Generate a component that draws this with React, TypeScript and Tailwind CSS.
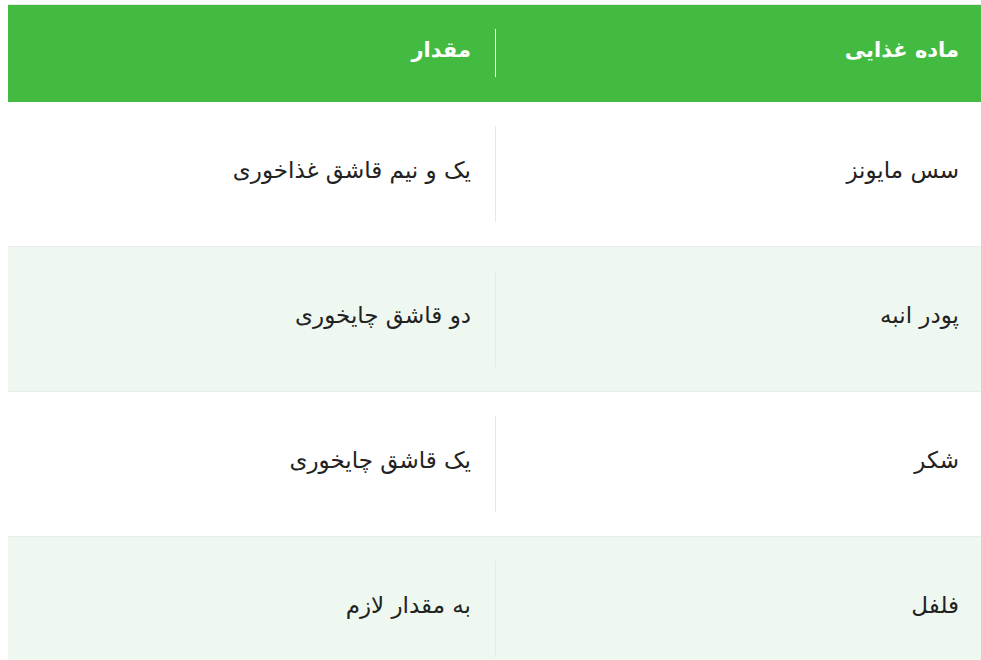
const rows = [
  { item: 'سس مایونز', amount: 'یک و نیم قاشق غذاخوری' },
  { item: 'پودر انبه', amount: 'دو قاشق چایخوری' },
  { item: 'شکر', amount: 'یک قاشق چایخوری' },
  { item: 'فلفل', amount: 'به مقدار لازم' },
]

export default function App() {
  return (
    <div
      dir="rtl"
      className="min-h-screen bg-white pt-1"
      style={{ fontFamily: '"DejaVu Sans", sans-serif' }}
    >
      <div className="mr-[-1px] ml-2 w-[974px] border-t border-[#e6e6e6]">
        <div className="grid grid-cols-2 border-b border-[#43bb41] bg-[#43bb41] text-white">
          <div className="py-6 pr-[23px]">
            <div className="flex h-12 items-center border-l border-white pb-1 text-[21px] font-bold">
              ماده غذایی
            </div>
          </div>
          <div className="py-6">
            <div className="flex h-12 items-center pr-6 pb-1 text-[21px] font-bold">مقدار</div>
          </div>
        </div>
        {rows.map((row, i) => (
          <div
            key={row.item}
            className={`grid grid-cols-2 border-b border-[#e9ecea] text-[#222] ${
              i % 2 === 1 ? 'bg-[#eff8f0]' : 'bg-white'
            }`}
          >
            <div className="py-6 pr-[23px]">
              <div className="flex h-24 items-center border-l border-[#e8e8e8] pb-2 text-[23px]">
                {row.item}
              </div>
            </div>
            <div className="py-6">
              <div className="flex h-24 items-center pr-6 pb-2 text-[23px]">{row.amount}</div>
            </div>
          </div>
        ))}
      </div>
    </div>
  )
}
